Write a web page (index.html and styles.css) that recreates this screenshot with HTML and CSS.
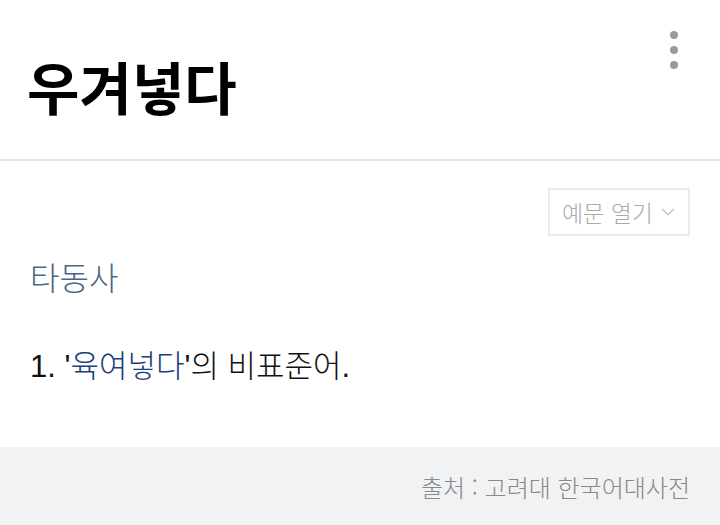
FILE: index.html
```html
<!DOCTYPE html>
<html lang="ko">
<head>
    <meta charset="UTF-8">
    <meta name="viewport" content="width=device-width, initial-scale=1.0">
    <title>우겨넣다</title>
    <link rel="stylesheet" href="styles.css">
</head>
<body>
    <!-- Header -->
    <div class="header">
        <h1 class="word">우겨넣다</h1>
        <div class="more">
            <span class="dot"></span>
            <span class="dot"></span>
            <span class="dot"></span>
        </div>
    </div>

    <!-- Meaning -->
    <div class="content">
        <div class="toolbar">
            <button class="example-btn">예문 열기
                <svg width="14" height="8" viewBox="0 0 14 8"><path d="M1 1 L7 6.5 L13 1" fill="none" stroke="#c4c4c4" stroke-width="1.4"/></svg>
            </button>
        </div>
        <div class="pos">타동사</div>
        <p class="meaning">1. '<a href="#">육여넣다</a>'의 비표준어.</p>
    </div>

    <!-- Source -->
    <div class="source">출처 : 고려대 한국어대사전</div>
</body>
</html>
```

FILE: styles.css
```css
body {
    margin: 0;
    font-family: "Liberation Sans", "Noto Sans CJK KR", sans-serif;
    background-color: #fff;
    width: 720px;
    height: 525px;
    overflow: hidden;
}
.header {
    display: flex;
    justify-content: space-between;
    height: 159px;
    border-bottom: 2px solid #e4e4e4;
}
.word {
    margin: 0;
    padding: 43px 0 0 27px;
    font-family: "Noto Sans CJK KR", sans-serif;
    font-size: 57px;
    font-weight: 700;
    line-height: 84px;
    color: #000;
}
.more {
    display: flex;
    flex-direction: column;
    gap: 7px;
    padding: 31px 42px 0 0;
}
.dot {
    width: 8px;
    height: 8px;
    border-radius: 50%;
    background-color: #9a9a9a;
}
.content {
    padding: 27px 30px 0 30px;
    height: 259px;
}
.toolbar {
    display: flex;
    justify-content: flex-end;
}
.example-btn {
    display: flex;
    align-items: center;
    gap: 8px;
    height: 48px;
    padding: 0 13px 0 12px;
    border: 2px solid #ebebeb;
    background-color: #fff;
    font-family: "Noto Sans CJK KR", sans-serif;
    font-size: 23px;
    font-weight: 300;
    color: #ababab;
}
.pos {
    margin-top: 17px;
    font-family: "Noto Sans CJK KR", sans-serif;
    font-size: 32px;
    font-weight: 300;
    color: #4b6788;
}
.meaning {
    margin: 42px 0 0 0;
    font-size: 31px;
    font-weight: 300;
    color: #111;
}
.meaning a {
    color: #1c3e7c;
    text-decoration: none;
}
.source {
    height: 78px;
    background-color: #f1f2f4;
    display: flex;
    align-items: center;
    justify-content: flex-end;
    padding-right: 30px;
    font-family: "Noto Sans CJK KR", sans-serif;
    font-size: 24px;
    font-weight: 300;
    color: #888;
}
```
